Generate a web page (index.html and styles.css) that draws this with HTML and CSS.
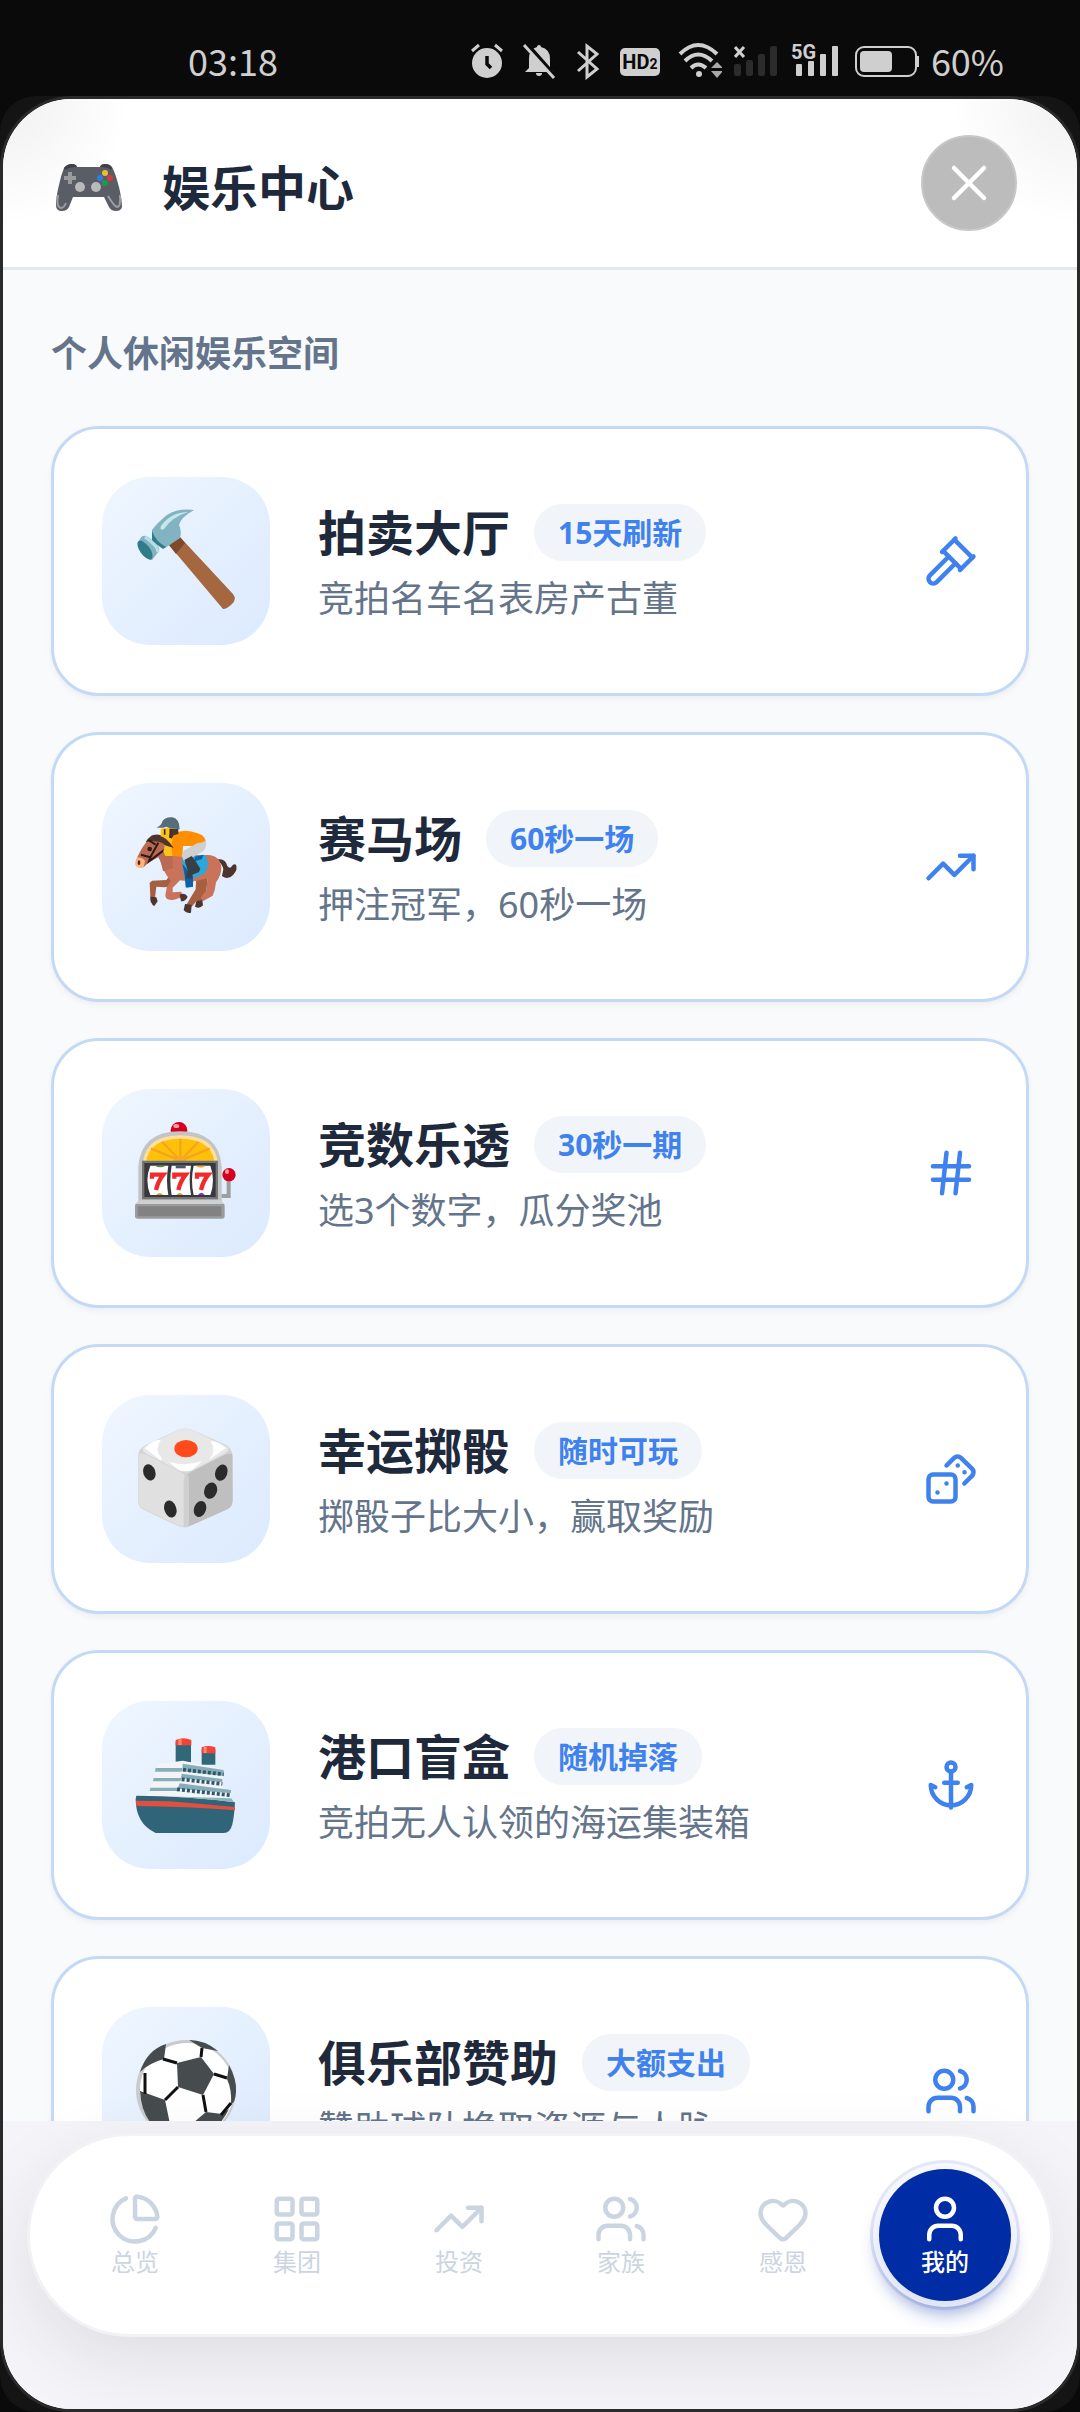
FILE: index.html
```html
<!DOCTYPE html>
<html lang="zh-CN">
<head>
    <meta charset="UTF-8">
    <meta name="viewport" content="width=device-width, initial-scale=1.0">
    <title>娱乐中心</title>
    <link rel="stylesheet" href="styles.css">
</head>
<body>
    <div class="status-bar">
        <span class="time">03:18</span>
        <div class="status-icons">
            <!-- alarm -->
            <svg width="36" height="40" viewBox="0 0 36 40">
                <circle cx="18" cy="23" r="15" fill="#cfcfcf"/>
                <path d="M3 11l7-6M33 11l-7-6" stroke="#cfcfcf" stroke-width="3" fill="none"/>
                <path d="M18 16v8l4 4" stroke="#0a0a0a" stroke-width="3.5" fill="none"/>
            </svg>
            <!-- muted bell -->
            <svg width="44" height="40" viewBox="0 0 44 40">
                <path d="M20 7q0-2 2-2t2 2q9 2 9 12v9l4 4H8l4-4v-9q0-10 8-12zM19 33h6q0 3-3 3t-3-3z" fill="#cfcfcf"/>
                <path d="M10 4l30 34" stroke="#0a0a0a" stroke-width="4"/>
                <path d="M7 5l30 33" stroke="#cfcfcf" stroke-width="3"/>
            </svg>
            <!-- bluetooth -->
            <svg width="32" height="40" viewBox="0 0 32 40">
                <path d="M5 12l19 17-10 8V6l10 8L5 31" stroke="#cfcfcf" stroke-width="3" fill="none"/>
            </svg>
            <span class="hd">HD<small>2</small></span>
            <!-- wifi -->
            <svg width="49" height="40" viewBox="0 0 49 40">
                <g fill="none" stroke="#cfcfcf" stroke-width="4">
                    <path d="M7 14Q25-4 44 14"/>
                    <path d="M12 21q13-13 27 0"/>
                    <path d="M18 28q7-7 15 0"/>
                </g>
                <circle cx="26" cy="34" r="3" fill="#cfcfcf"/>
                <path d="M38 28l6-6 6 6zM38 31h12l-6 7z" fill="#a8a8a8"/>
            </svg>
            <!-- sim 1, no service -->
            <svg width="45" height="40" viewBox="0 0 45 40">
                <path d="M1 7l9 10M10 7L1 17" stroke="#cfcfcf" stroke-width="3"/>
                <g fill="#2b2b2b">
                    <rect x="0" y="24" width="7" height="12" rx="2"/>
                    <rect x="12" y="20" width="7" height="16" rx="2"/>
                    <rect x="24" y="14" width="7" height="22" rx="2"/>
                    <rect x="36" y="6" width="7" height="30" rx="2"/>
                </g>
            </svg>
            <!-- sim 2 -->
            <svg width="50" height="40" viewBox="0 0 50 40">
                <text class="net" x="0" y="19">5G</text>
                <g fill="#cfcfcf">
                    <rect x="5" y="24" width="6" height="12" rx="1"/>
                    <rect x="17" y="21" width="6" height="15" rx="1"/>
                    <rect x="29" y="14" width="6" height="22" rx="1"/>
                    <rect x="41" y="6" width="6" height="30" rx="1"/>
                </g>
            </svg>
            <!-- battery -->
            <svg width="66" height="40" viewBox="0 0 66 40">
                <rect x="3" y="7" width="60" height="29" rx="8" fill="none" stroke="#cfcfcf" stroke-width="2"/>
                <rect x="7" y="11" width="32" height="21" rx="4" fill="#cfcfcf"/>
                <rect x="64" y="16" width="2" height="11" fill="#cfcfcf"/>
            </svg>
            <span>60%</span>
        </div>
    </div>

    <div class="device">
        <div class="screen">
            <header class="header">
                <div class="brand">
                    <svg width="75" height="60" viewBox="51 158 75 60">
                        <path d="M64 168q3-4 8-4 4 0 5 3h23q1-3 5-3 5 0 7 3 3 5 7 20 3 13 3 20-1 4-6 4-5 0-7-4l-5-10H73l-4 10q-2 4-7 4-6 0-6-6 0-8 3-20 2-10 5-17z" fill="#5b5d66"/>
                        <path d="M64 168q3-4 8-4 4 0 5 3-8 0-12 3zM112 168q-2-4-7-4-4 0-5 3 8 0 11 3z" fill="#3f4149"/>
                        <path d="M70 172v12M64 178h12" stroke="#9b9b9b" stroke-width="4"/>
                        <circle cx="80" cy="187" r="5" fill="#b9b9b9"/>
                        <circle cx="96" cy="187" r="5" fill="#b9b9b9"/>
                        <circle cx="105" cy="173" r="3" fill="#e8c02c"/>
                        <circle cx="110" cy="178" r="3" fill="#d63a3a"/>
                        <circle cx="100" cy="178" r="3" fill="#2f7fe0"/>
                        <circle cx="105" cy="183" r="3" fill="#1f9a4c"/>
                        <path d="M58 195q-2 12 3 13 3 0 5-5M120 195q1 12-3 12-3-1-9-11" fill="none" stroke="#9b9ca3" stroke-width="2"/>
                    </svg>
                    <h1>娱乐中心</h1>
                </div>
                <button class="close" type="button" aria-label="关闭">
                    <svg class="icon" width="60" height="60" viewBox="0 0 24 24"><path d="M18 6 6 18M6 6l12 12"/></svg>
                </button>
            </header>

            <main class="content">
                <h2>个人休闲娱乐空间</h2>
                <div class="games">
                    <a class="card" href="#auction">
                        <span class="tile">
                            <svg width="108" height="108" viewBox="30 30 108 108">
                                <path d="M67 68l10-9 54 58q4 5-1 10t-9 5z" fill="#a5673f"/>
                                <path d="M67 68l10-9 6 7-9 11z" fill="#7d4a2b"/>
                                <path d="M92 33q-16-2-27 5-10 8-15 15v8l13 10 15-10q2-7-1-13 1-7 15-15z" fill="#82b3c0"/>
                                <path d="M86 35q-17 0-27 14-2 5 3 3 8-12 24-17z" fill="#c4e7eb"/>
                                <path d="M50 54v10l11 8 3-2q-10-5-14-16z" fill="#2f7d89"/>
                                <path d="M37 64q3-8 9-4 13 9 11 14l-7 9q-10 0-13-19z" fill="#82b3c0"/>
                                <path d="M43 60q13 9 13 15" stroke="#b9dfe4" stroke-width="3" fill="none"/>
                                <ellipse cx="43" cy="73" rx="5" ry="11" transform="rotate(-36 43 73)" fill="#2f7d89"/>
                            </svg>
                        </span>
                        <span class="info">
                            <span class="title">拍卖大厅 <em>15天刷新</em></span>
                            <span class="desc">竞拍名车名表房产古董</span>
                        </span>
                        <svg class="icon" width="54" height="54" viewBox="0 0 24 24">
                            <path d="m14 13-8.381 8.381a1 1 0 0 1-3.001-3l8.384-8.381"/><path d="m16 16 6-6"/><path d="m21.5 10.5-8-8"/><path d="m8 8 6-6"/><path d="m8.5 7.5 8 8"/>
                        </svg>
                    </a>

                    <a class="card" href="#racing">
                        <span class="tile">
                            <svg width="108" height="108" viewBox="157 159 324 324">
                                <!-- tail and far legs -->
                                <path d="M415 298q22-4 28 20 8 10 14 0 4-8 12-4 6 14-8 30-16 18-34 4l4-20q-4-18-16-24z" fill="#4e342e"/>
                                <path d="M276 340q8 20 2 38l-22 4-26-2-4 34-14-2-2-44 8-6 42-2z" fill="#a6603f"/>
                                <path d="M350 350l34-2-4 50-14 28-16-2-14 16-16-6 28-46z" fill="#a6603f"/>
                                <path d="M212 410l18 2 4 12-10 14q-14-8-12-28zM316 432l20 2-2 24q-14 4-22-8zM350 424l18-4 2 16q-10 12-24 4z" fill="#4e342e"/>
                                <!-- body -->
                                <path d="M245 285h140q36 2 40 36 0 26-16 46-2 24-10 40l-28 16-8-10 18-24 2-34-46 10-36-4-22 22 0 14 26-2 4 16-26 8q-26 4-26-14l4-22 12-20q-28-36-28-60z" fill="#c8735a"/>
                                <path d="M300 404q16-8 24 6-6 14-20 14z" fill="#4e342e"/>
                                <!-- neck and head -->
                                <path d="M202 244l14-18 20 2 40 32 4 64-30 10q-6-30-14-42l-30 16-14 14q-20 0-24-18 14-36 34-60z" fill="#b96a50"/>
                                <path d="M198 246q18-30 46-20l40 38q-24-8-36-16-20-8-50-2z" fill="#4e342e"/>
                                <path d="M172 292q14 0 24 10l-4 20q-20 6-26-10z" fill="#ffb380"/>
                                <ellipse cx="178" cy="308" rx="4" ry="7" fill="#4e2a20"/>
                                <circle cx="210" cy="267" r="7" fill="#2b1a17"/>
                                <path d="M184 284l28 8 24-44M212 292l-4 12 56-42M206 240l22 14" fill="none" stroke="#2b1a17" stroke-width="6"/>
                                <!-- saddle cloth -->
                                <path d="M306 292l64-6q16 2 14 28 0 24-24 34l-20 6v26l-20 4q-10-46-14-92z" fill="#29a8dc"/>
                                <path d="M308 312q10 40 10 70l22-2v-32zM346 290l26-6-6 14-22 6z" fill="#0d60a8"/>
                                <!-- jockey -->
                                <path d="M243 206l40-6 8 22-4 66-30 0-6-14 4-16-12-22z" fill="#fcc21b"/>
                                <path d="M284 220q32-16 70 0 28 10 24 30l-34 8-34 0-2 32-30-2q-6-48 6-68z" fill="#ff8f00"/>
                                <path d="M378 240q6 20-8 34l-56 32-8-18 6-16 40-22q20-2 26-10z" fill="#cfcfcf"/>
                                <path d="M314 300l22-12 12 16 14 22-4 10-20 8-2 12-18-2 6-24z" fill="#374046"/>
                                <path d="M274 206h22v16l-14 4-6 10-8-4z" fill="#4e342e"/>
                                <path d="M230 202q16-4 18-18 10-14 30-12 22 4 22 36l-30-4-10-4q-14 6-30 2z" fill="#546e7a"/>
                                <path d="M255 208v16M272 206v28" stroke="#3b2a20" stroke-width="5"/>
                                <path d="M238 228q20 0 44 36l-26-8-22-20z" fill="#4e342e"/>
                            </svg>
                        </span>
                        <span class="info">
                            <span class="title">赛马场 <em>60秒一场</em></span>
                            <span class="desc">押注冠军，60秒一场</span>
                        </span>
                        <svg class="icon" width="54" height="54" viewBox="0 0 24 24"><path d="M16 7h6v6"/><path d="m22 7-8.5 8.5-5-5L2 17"/></svg>
                    </a>

                    <a class="card" href="#lotto">
                        <span class="tile">
                            <svg width="108" height="108" viewBox="157 147 324 324">
                                <circle cx="298" cy="181" r="25" fill="#d3001f"/>
                                <ellipse cx="290" cy="168" rx="9" ry="6" fill="#ff9d9d"/>
                                <path d="M425 378h22v-50" fill="none" stroke="#9e9e9e" stroke-width="12"/>
                                <circle cx="448" cy="314" r="20" fill="#d3001f"/>
                                <ellipse cx="442" cy="305" rx="6" ry="7" fill="#ff9d9d"/>
                                <path d="M176 404V290q8-106 125-106 117 0 125 106v114z" fill="#c2c4c6"/>
                                <path d="M190 274q12-78 112-78t112 78z" fill="#ffdf9e"/>
                                <path d="M200 272q12-66 102-66t102 66z" fill="#ffc107"/>
                                <path d="M302 272L214 236M302 272l-54-56M302 272v-66M302 272l54-56M302 272l88-36" stroke="#f5a51d" stroke-width="7"/>
                                <path d="M280 272q22-26 44 0z" fill="#f9a825"/>
                                <rect x="187" y="272" width="228" height="116" fill="#757575"/>
                                <rect x="194" y="279" width="214" height="102" fill="#37393d"/>
                                <path d="M212 287h54q-8 44 0 88h-54q-18-44 0-88zM276 287h58q-8 44 0 88h-58q-8-44 0-88zM342 287h50q16 44 0 88h-50q-10-44 0-88z" fill="#fff"/>
                                <path d="M226 287h32q-16 10-32 0z" fill="#4b8b2b"/>
                                <path d="M288 287h30v8h-30z" fill="#455a64"/>
                                <path d="M348 287h30q-14 12-30 0z" fill="#f9a825"/>
                                <path d="M230 375q10-12 20 0zM290 375q10-12 20 0z" fill="#d8a12c"/>
                                <path d="M355 375q10-14 20 0z" fill="#7e3fa8"/>
                                <g fill="none" stroke="#f02b2b" stroke-width="13">
                                    <path d="M217 326v-12h34q-16 20-22 46"/>
                                    <path d="M284 326v-12h34q-16 20-22 46"/>
                                    <path d="M352 326v-12h34q-16 20-22 46"/>
                                </g>
                                <rect x="166" y="400" width="269" height="46" rx="8" fill="#9b9b9b"/>
                                <rect x="174" y="409" width="251" height="30" rx="3" fill="#828282"/>
                                <path d="M178 391h246l10 11H168z" fill="#cfd0d1"/>
                            </svg>
                        </span>
                        <span class="info">
                            <span class="title">竞数乐透 <em>30秒一期</em></span>
                            <span class="desc">选3个数字，瓜分奖池</span>
                        </span>
                        <svg class="icon" width="54" height="54" viewBox="0 0 24 24"><path d="M4 9h16M4 15h16M10 3 8 21M16 3l-2 18"/></svg>
                    </a>

                    <a class="card" href="#dice">
                        <span class="tile">
                            <svg width="108" height="108" viewBox="157 135 324 324">
                                <path d="M198 195l98-45q20-9 42 0l102 45q19 12 19 36v130q0 18-16 27l-104 46q-22 14-44 4l-102-48q-18-10-18-28V228q2-22 23-33z" fill="#d4d4d4"/>
                                <path d="M194 200l102-49q20-9 42 0l104 49q10 8-6 20l-96 50q-22 9-44 0l-98-50q-16-12-4-20z" fill="#e8e8e8"/>
                                <path d="M196 205q20-26 48-26-20 28-2 50 10 12 0 12zM438 205q-20-22-46-22 20 30-4 56zM268 245q50 16 100-2l-30 26q-20 9-42 0z" fill="#fff"/>
                                <path d="M178 222q14-4 30 6l98 50q14 10 14 28v134q-14 2-24-4l-102-48q-18-10-18-28V240z" fill="#e0e0e0"/>
                                <path d="M458 222q-14-2-30 6l-98 50q-16 10-16 28v134q14 0 25-6l104-46q16-9 16-27z" fill="#bfbfbf"/>
                                <path d="M312 440V306q0-18 10-26 6 8 6 26v132q-8 4-16 2z" fill="#d0d0d0"/>
                                <ellipse cx="319" cy="206" rx="35" ry="26" fill="#ff4a1c"/>
                                <g fill="#2b2b2b">
                                    <ellipse cx="209" cy="277" rx="18" ry="25" transform="rotate(-18 209 277)"/>
                                    <ellipse cx="272" cy="387" rx="18" ry="26" transform="rotate(-18 272 387)"/>
                                    <ellipse cx="425" cy="278" rx="18" ry="25" transform="rotate(20 425 278)"/>
                                    <ellipse cx="393" cy="332" rx="19" ry="25" transform="rotate(20 393 332)"/>
                                    <ellipse cx="361" cy="387" rx="18" ry="25" transform="rotate(20 361 387)"/>
                                </g>
                            </svg>
                        </span>
                        <span class="info">
                            <span class="title">幸运掷骰 <em>随时可玩</em></span>
                            <span class="desc">掷骰子比大小，赢取奖励</span>
                        </span>
                        <svg class="icon" width="54" height="54" viewBox="0 0 24 24">
                            <rect width="12" height="12" x="2" y="10" rx="2"/><path d="m17.92 14 3.5-3.5a2.24 2.24 0 0 0 0-3l-5-4.92a2.24 2.24 0 0 0-3 0L10 6"/><path d="M6 18h.01M10 14h.01M15 6h.01M18 9h.01"/>
                        </svg>
                    </a>

                    <a class="card" href="#blindbox">
                        <span class="tile">
                            <svg width="108" height="108" viewBox="157 123 324 324">
                                <path d="M288 155h46v62h-46zM366 178h41v46h-41z" fill="#30687a"/>
                                <path d="M288 150q22-10 47 0v16h-47zM366 172q20-8 41 0v18h-41z" fill="#f44336"/>
                                <path d="M296 148h10v17h-10zM372 171h9v18h-9z" fill="#ff8a70"/>
                                <path d="M234 222l76-10 122 26-4 54 26 14v32l-256-18 16-28z" fill="#f2f4f5"/>
                                <path d="M228 234h80l-2 11h-80zM222 264h84l-4 10h-82zM212 293h86l-4 10h-84z" fill="#86adba"/>
                                <path d="M309 221l123 19v18l-124-14zM306 251l122 16v10l-124-12zM300 280l154 20v10l-160-14z" fill="#86adba"/>
                                <path d="M310 239l122 14M306 268l122 14M292 298l162 18" stroke="#30566a" stroke-width="11" stroke-dasharray="9 6" fill="none"/>
                                <path d="M170 317q150 0 296 20-2 40-8 66-6 26-26 26H228q-60-28-60-102z" fill="#306478"/>
                                <path d="M200 317l255 8 8 12q-130-18-263-20z" fill="#8fb4c0"/>
                                <path d="M169 332l100 2q100 8 197 17v10q-150-12-297-13z" fill="#e0503f"/>
                            </svg>
                        </span>
                        <span class="info">
                            <span class="title">港口盲盒 <em>随机掉落</em></span>
                            <span class="desc">竞拍无人认领的海运集装箱</span>
                        </span>
                        <svg class="icon" width="54" height="54" viewBox="0 0 24 24">
                            <path d="M12 6v16"/><path d="m19 13 2-1a9 9 0 0 1-18 0l2 1"/><path d="M9 11h6"/><circle cx="12" cy="4" r="2"/>
                        </svg>
                    </a>

                    <a class="card" href="#club">
                        <span class="tile">
                            <svg width="108" height="108" viewBox="30 30 108 108">
                                <circle cx="84" cy="83" r="50" fill="#c9cbcc"/>
                                <circle cx="85" cy="83" r="47" fill="#fff"/>
                                <g fill="#464b4e">
                                    <path d="M75 56l24-6 13 17-11 21-25-8z"/>
                                    <path d="M38 65q7-22 26-28l-2 15q-15 4-24 13zM87 33q16 0 29 11l-16-3zM127 58q8 15 7 27t-5 12q1-14-4-25z"/>
                                    <path d="M38 84l25 9 5 24 4 14q-32-10-34-47zM104 105l16 2 7-5q-12 24-32 29l-4-15z"/>
                                </g>
                                <path d="M75 56l-14-4M99 50l1-9M112 67l13 4M101 88l3 17M76 80L63 93M43 66v21M119 108l10-12" stroke="#111" stroke-width="3" fill="none"/>
                            </svg>
                        </span>
                        <span class="info">
                            <span class="title">俱乐部赞助 <em>大额支出</em></span>
                            <span class="desc">赞助球队换取资源与人脉</span>
                        </span>
                        <svg class="icon" width="54" height="54" viewBox="0 0 24 24">
                            <path d="M16 21v-2a4 4 0 0 0-4-4H6a4 4 0 0 0-4 4v2"/><path d="M16 3.128a4 4 0 0 1 0 7.744"/><path d="M22 21v-2a4 4 0 0 0-3-3.87"/><circle cx="9" cy="7" r="4"/>
                        </svg>
                    </a>
                </div>
            </main>

            <footer class="bottom">
                <nav class="tabs">
                    <a href="#overview">
                        <svg class="icon" width="54" height="54" viewBox="0 0 24 24"><path d="M21 12c.552 0 1.005-.449.95-.998a10 10 0 0 0-8.953-8.951c-.55-.055-.998.398-.998.95v8a1 1 0 0 0 1 1z"/><path d="M21.21 15.89A10 10 0 1 1 8 2.83"/></svg>
                        总览
                    </a>
                    <a href="#group">
                        <svg class="icon" width="54" height="54" viewBox="0 0 24 24"><rect width="7" height="7" x="3" y="3" rx="1"/><rect width="7" height="7" x="14" y="3" rx="1"/><rect width="7" height="7" x="14" y="14" rx="1"/><rect width="7" height="7" x="3" y="14" rx="1"/></svg>
                        集团
                    </a>
                    <a href="#invest">
                        <svg class="icon" width="54" height="54" viewBox="0 0 24 24"><path d="M16 7h6v6"/><path d="m22 7-8.5 8.5-5-5L2 17"/></svg>
                        投资
                    </a>
                    <a href="#family">
                        <svg class="icon" width="54" height="54" viewBox="0 0 24 24"><path d="M16 21v-2a4 4 0 0 0-4-4H6a4 4 0 0 0-4 4v2"/><path d="M16 3.128a4 4 0 0 1 0 7.744"/><path d="M22 21v-2a4 4 0 0 0-3-3.87"/><circle cx="9" cy="7" r="4"/></svg>
                        家族
                    </a>
                    <a href="#thanks">
                        <svg class="icon" width="54" height="54" viewBox="0 0 24 24"><path d="M2 9.5a5.5 5.5 0 0 1 9.591-3.676.56.56 0 0 0 .818 0A5.49 5.49 0 0 1 22 9.5c0 2.29-1.5 4-3 5.5l-5.492 5.313a2 2 0 0 1-3 .019L5 15c-1.5-1.5-3-3.2-3-5.5"/></svg>
                        感恩
                    </a>
                    <a class="active" href="#me">
                        <svg class="icon" width="54" height="54" viewBox="0 0 24 24"><path d="M19 21v-2a4 4 0 0 0-4-4H9a4 4 0 0 0-4 4v2"/><circle cx="12" cy="7" r="4"/></svg>
                        我的
                    </a>
                </nav>
            </footer>
        </div>
    </div>
</body>
</html>
```
FILE: styles.css
```css
* {
    margin: 0;
    padding: 0;
    box-sizing: border-box;
}

body {
    height: 100vh;
    display: flex;
    flex-direction: column;
    background: #0a0a0a;
    font-family: "Noto Sans", "Noto Sans CJK SC", sans-serif;
}

a {
    color: inherit;
    text-decoration: none;
}

.icon {
    fill: none;
    stroke: currentColor;
    stroke-width: 2;
    stroke-linecap: round;
    stroke-linejoin: round;
    flex-shrink: 0;
}

/* status bar */
.status-bar {
    height: 96px;
    flex-shrink: 0;
    display: flex;
    justify-content: space-between;
    padding: 40px 76px 0 188px;
    color: #cfcfcf;
    font-family: "Noto Sans CJK SC", sans-serif;
    font-size: 36px;
    line-height: 40px;
}

.status-icons {
    display: flex;
    gap: 12px;
}

.hd {
    width: 40px;
    height: 28px;
    margin: 8px 1px 0 3px;
    border-radius: 5px;
    background: #cfcfcf;
    color: #0a0a0a;
    font-family: Roboto, sans-serif;
    font-size: 20px;
    font-weight: bold;
    line-height: 28px;
    text-align: center;
}

.hd small {
    font-size: 14px;
}

.net {
    fill: #cfcfcf;
    font-family: Roboto, sans-serif;
    font-size: 20px;
    font-weight: bold;
}

/* app frame */
.device {
    flex: 1;
    min-height: 0;
    display: flex;
    border-radius: 36px;
    background: #141414;
}

.screen {
    flex: 1;
    min-width: 0;
    display: flex;
    flex-direction: column;
    overflow: hidden;
    border: 3px solid #2a2a2a;
    border-radius: 72px;
    background: #f8fafc;
}

.header {
    display: flex;
    justify-content: space-between;
    align-items: center;
    padding: 36px 60px 36px 48px;
    border-bottom: 3px solid #e2e8eb;
    background:
        radial-gradient(circle at top left, rgba(0, 0, 0, 0.06), transparent 126px),
        radial-gradient(circle at top right, rgba(0, 0, 0, 0.06), transparent 126px),
        #fff;
}

.brand {
    display: flex;
    align-items: center;
    gap: 36px;
    padding-top: 10px;
}

.header h1 {
    font-size: 48px;
    line-height: 72px;
    color: #1e293b;
}

.close {
    width: 96px;
    height: 96px;
    display: flex;
    align-items: center;
    justify-content: center;
    border: 2px solid #c8c8c8;
    border-radius: 50%;
    background: #bcbcbc;
    color: #fff;
}

.close .icon {
    stroke-width: 1.8;
}

/* game list */
.content {
    flex: 1;
    min-height: 0;
    overflow-y: auto;
    scrollbar-width: none;
    padding: 54px 48px;
}

.content h2 {
    margin-bottom: 42px;
    font-size: 36px;
    line-height: 60px;
    color: #64748b;
}

.games {
    display: flex;
    flex-direction: column;
    gap: 36px;
}

.card {
    display: flex;
    align-items: center;
    gap: 48px;
    padding: 48px;
    border: 3px solid #c3d9f6;
    border-radius: 48px;
    background: #fff;
    box-shadow: 0 3px 6px rgba(15, 23, 42, 0.05);
    color: #3f82ee;
}

.tile {
    width: 168px;
    height: 168px;
    flex-shrink: 0;
    display: flex;
    align-items: center;
    justify-content: center;
    border-radius: 48px;
    background: linear-gradient(135deg, #eff6ff, #dbeafe);
}

.info {
    flex: 1;
    display: flex;
    flex-direction: column;
    gap: 15px;
}

.title {
    display: flex;
    align-items: center;
    gap: 24px;
    font-size: 48px;
    font-weight: bold;
    line-height: 60px;
    color: #1e293b;
}

.title em {
    padding: 0 24px;
    border-radius: 30px;
    background: #f1f5f9;
    color: #3f82ee;
    font-size: 30px;
    font-style: normal;
    line-height: 57px;
}

.desc {
    font-size: 36px;
    line-height: 42px;
    color: #64748b;
}

/* bottom tabs */
.bottom {
    position: relative;
    flex-shrink: 0;
    padding: 12px 24px 72px;
    background: #f5f5f9;
}

.tabs {
    height: 204px;
    display: flex;
    align-items: center;
    padding: 0 24px;
    border: 3px solid #f2f2f5;
    border-radius: 102px;
    background: #fff;
    box-shadow: 0 24px 72px rgba(15, 15, 40, 0.1);
}

.tabs a {
    flex: 1;
    display: flex;
    flex-direction: column;
    align-items: center;
    justify-content: center;
    color: #cbd5e1;
    font-size: 24px;
    line-height: 32px;
}

.tabs .active {
    flex: 0 0 132px;
    height: 132px;
    margin: 0 15px;
    border-radius: 50%;
    background: #002ca5;
    box-shadow:
        0 0 0 6px rgba(255, 255, 255, 0.7),
        0 0 0 9px rgba(0, 44, 165, 0.1),
        0 12px 18px rgba(0, 44, 165, 0.4);
    color: #fff;
    font-weight: 500;
}
```
